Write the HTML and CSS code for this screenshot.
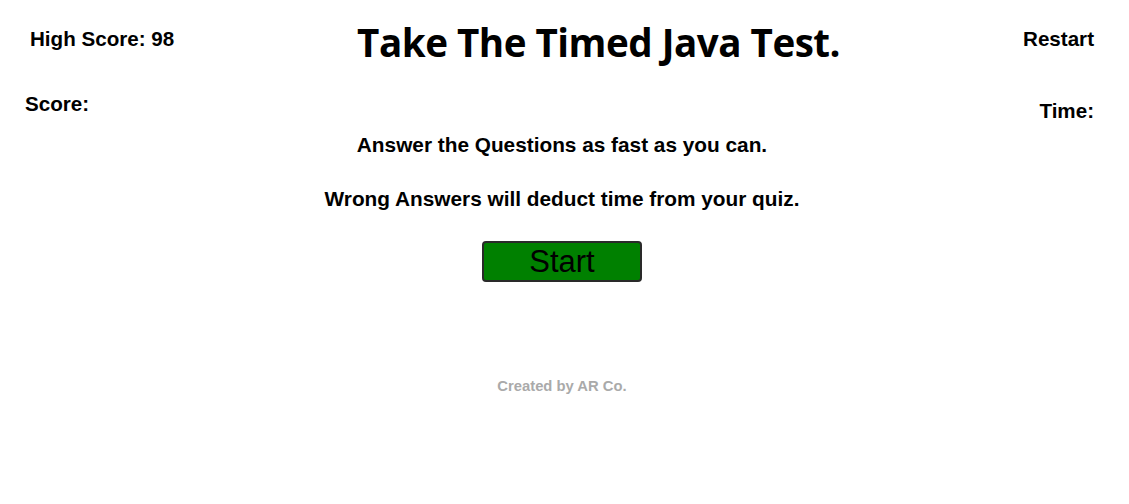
FILE: index.html
```html
<!DOCTYPE html>
<html>
<head>
<meta charset="utf-8">
<link rel="stylesheet" href="styles.css">
</head>
<body>
<header class="top">
  <div class="high">High Score: 98</div>
  <h1 class="title">Take The Timed Java Test.</h1>
  <div class="restart">Restart</div>
</header>
<div class="stats">
  <div class="score">Score:</div>
  <div class="time">Time:</div>
</div>
<main class="intro">
  <p class="line1">Answer the Questions as fast as you can.</p>
  <p class="line2">Wrong Answers will deduct time from your quiz.</p>
  <button class="start">Start</button>
</main>
<footer class="foot">Created by AR Co.</footer>
</body>
</html>
```
FILE: styles.css
```css
html, body {
  margin: 0;
  padding: 0;
  background: #fff;
  color: #000;
  font-family: "Liberation Sans", Arial, sans-serif;
}
.top {
  display: flex;
  justify-content: space-between;
  align-items: flex-start;
  padding: 0 35px 0 30px;
  height: 80px;
}
.high, .restart {
  font-weight: bold;
  font-size: 20.6px;
  margin-top: 27px;
}
.title {
  margin: 17px 0 0 0;
  font-family: "Open Sans", "Noto Sans", sans-serif;
  font-weight: 700;
  font-size: 38.6px;
  line-height: 50px;
  letter-spacing: -0.5px;
}
.stats {
  display: flex;
  justify-content: space-between;
  padding: 0 35px 0 25px;
  height: 50px;
}
.score, .time {
  font-weight: bold;
  font-size: 20.6px;
}
.score { margin-top: 12px; }
.time { margin-top: 19px; }
.intro {
  display: flex;
  flex-direction: column;
  align-items: center;
  padding-right: 5px;
}
.intro p {
  margin: 0;
  font-weight: bold;
  font-size: 20.8px;
  line-height: 24px;
}
.line1 { margin-top: 3px !important; }
.line2 { margin-top: 30px !important; }
.start {
  margin-top: 30px;
  width: 160px;
  height: 41px;
  background: #008000;
  border: 2px solid #2a2a2a;
  border-radius: 4px;
  font-family: "Liberation Sans", Arial, sans-serif;
  font-size: 31px;
  color: #000;
  padding: 0;
  line-height: 36px;
}
.foot {
  text-align: center;
  padding-right: 5px;
  margin-top: 96px;
  color: #aaa;
  font-weight: bold;
  font-size: 14.8px;
}
```
